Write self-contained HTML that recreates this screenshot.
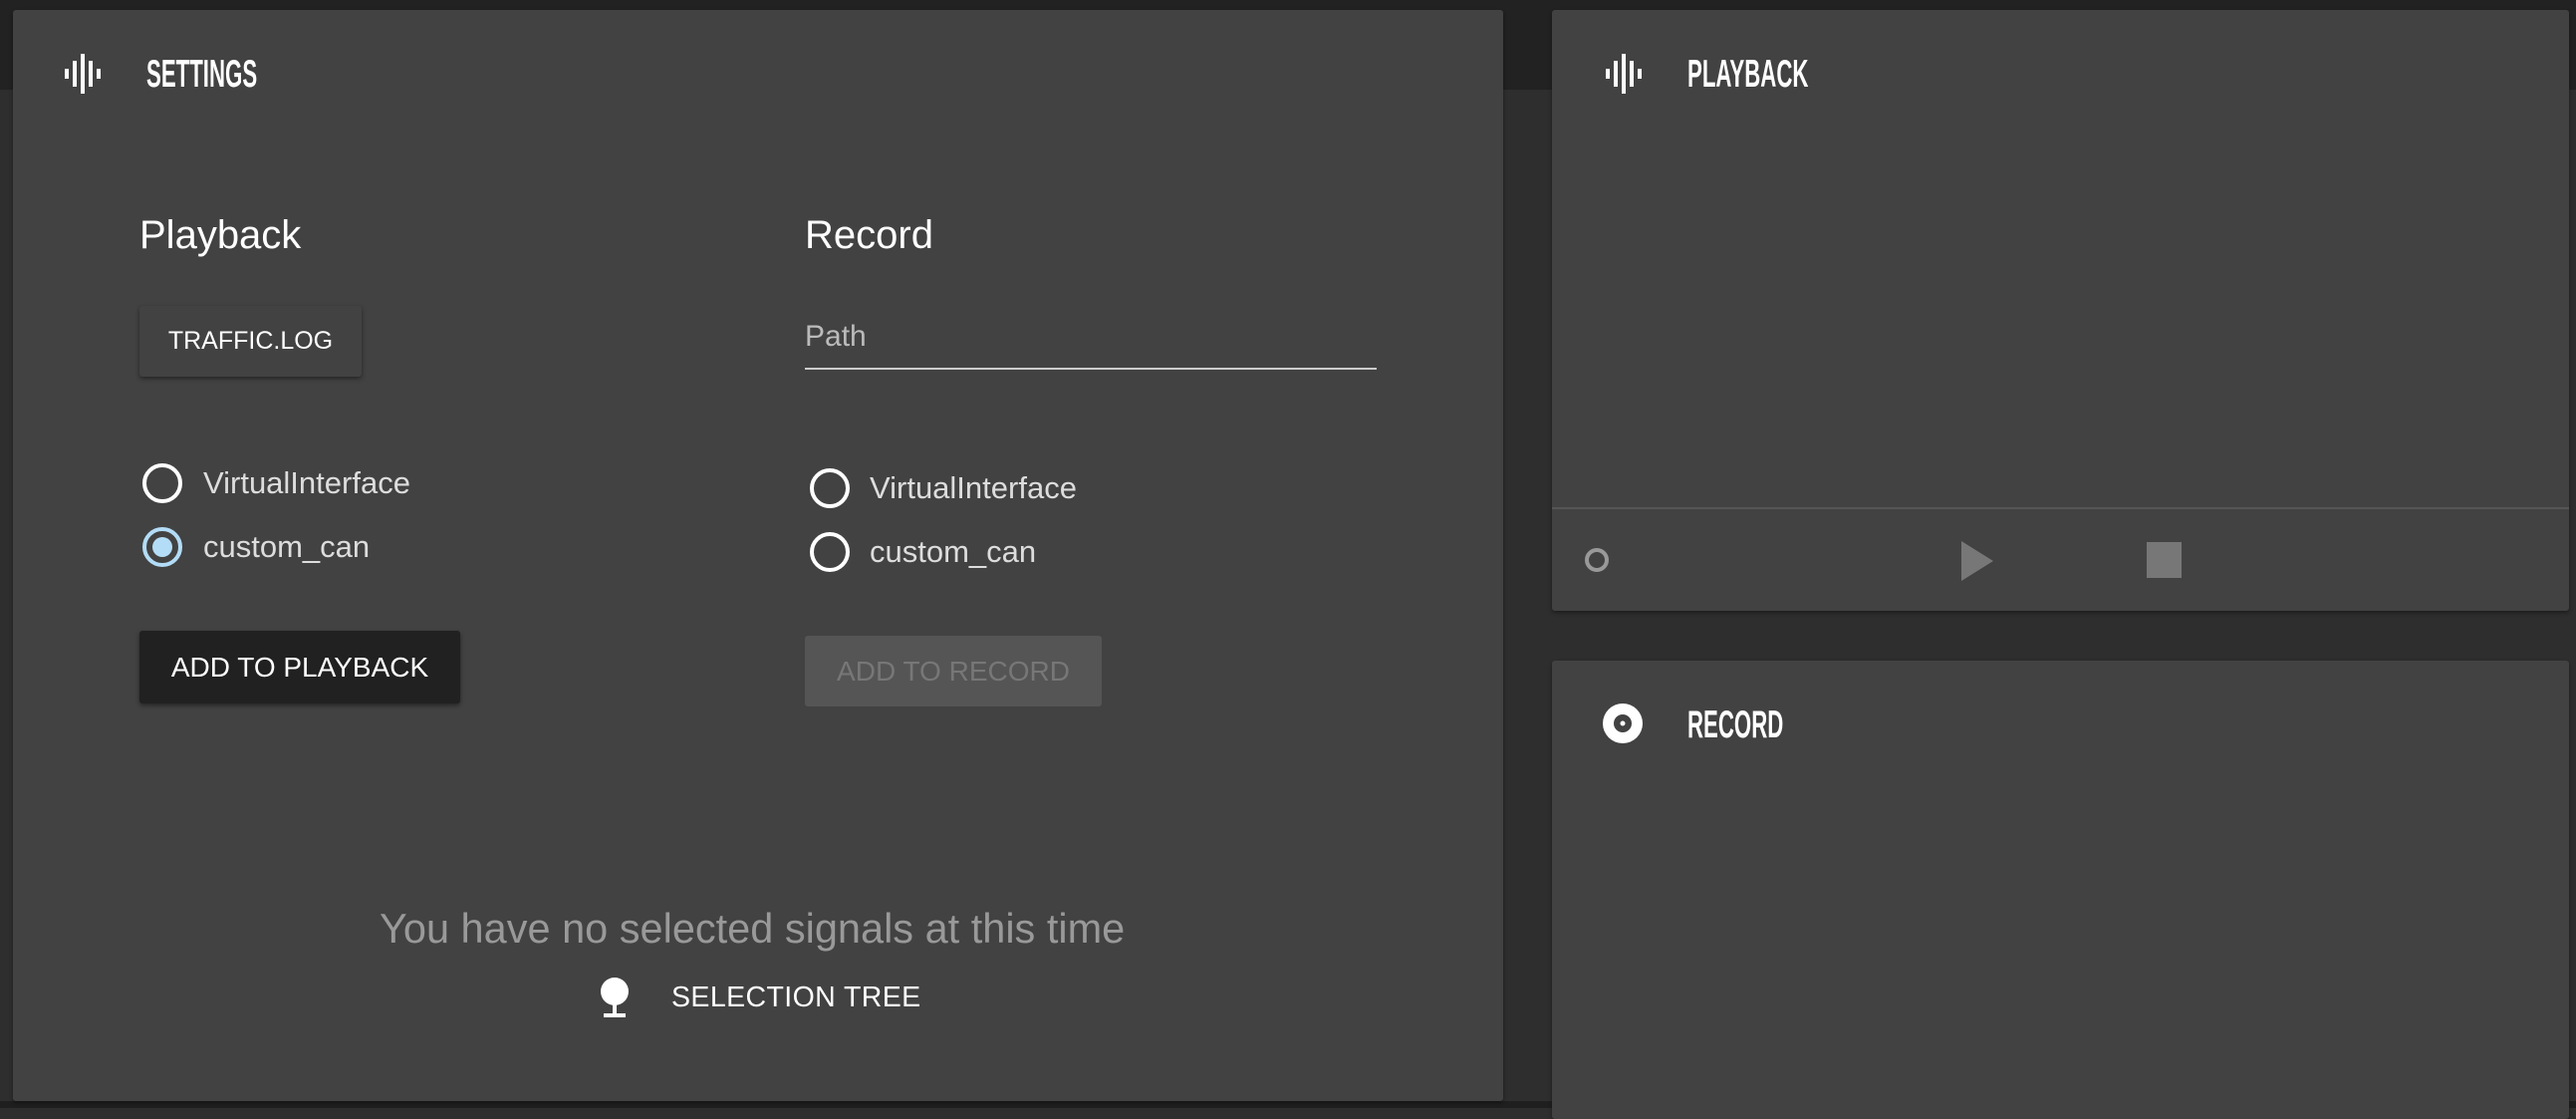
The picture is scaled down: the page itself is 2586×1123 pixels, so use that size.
<!DOCTYPE html>
<html><head><meta charset="utf-8">
<style>
*{margin:0;padding:0;box-sizing:border-box}
body{width:2586px;height:1112px;background:#2e2e2e;position:relative;overflow:hidden;font-family:"Liberation Sans",sans-serif;}
.hdr{position:absolute;left:0;top:0;width:2586px;height:90px;background:#222}
.bot{position:absolute;left:0;top:1105px;width:2586px;height:7px;background:#1f1f1f}
.card{position:absolute;background:#424242;border-radius:3px;box-shadow:0 2px 4px rgba(0,0,0,.4)}
.abs{position:absolute;white-space:nowrap}
.title{font-family:"Liberation Sans Narrow","Liberation Sans",sans-serif;font-weight:bold;color:#fff;font-size:39px;line-height:39px;transform:scaleX(.57);transform-origin:left center}
.h{font-size:40px;color:#fff;font-weight:300;line-height:40px}
.lbl{font-size:31px;color:#ddd;line-height:31px}
.radio{position:absolute;width:40px;height:40px;border:4px solid #fff;border-radius:50%}
.btn{position:absolute;border-radius:3px;display:flex;align-items:center;justify-content:center;font-size:28px}
</style></head><body>
<div class="hdr"></div>
<div class="bot"></div>

<div class="card" style="left:13px;top:10px;width:1496px;height:1095px"></div>
<svg class="abs" style="left:60px;top:54px" width="44" height="42"><g fill="#fff"><rect x="5" y="15" width="4" height="10"/><rect x="13" y="7" width="4" height="26"/><rect x="21" y="0" width="4" height="40"/><rect x="29" y="7" width="4" height="26"/><rect x="37" y="15" width="4" height="10"/></g></svg>
<div class="abs title" style="left:147px;top:55px">SETTINGS</div>

<div class="abs h" style="left:140px;top:216px">Playback</div>
<div class="btn" style="left:140px;top:307px;width:223px;height:71px;background:#424242;box-shadow:0 2px 5px rgba(0,0,0,.45);color:#fff;font-size:25px">TRAFFIC.LOG</div>
<div class="radio" style="left:143px;top:465px"></div>
<div class="abs lbl" style="left:204px;top:469px">VirtualInterface</div>
<div class="radio" style="left:143px;top:529px;border-color:#b3dcf7"><div style="position:absolute;left:6px;top:6px;width:20px;height:20px;border-radius:50%;background:#b3dcf7"></div></div>
<div class="abs lbl" style="left:204px;top:533px">custom_can</div>
<div class="btn" style="left:140px;top:633px;width:322px;height:73px;background:#212121;color:#fff;box-shadow:0 2px 5px rgba(0,0,0,.45)">ADD TO PLAYBACK</div>

<div class="abs h" style="left:808px;top:216px">Record</div>
<div class="abs" style="left:808px;top:321px;font-size:30px;color:#bbb">Path</div>
<div class="abs" style="left:808px;top:369px;width:574px;height:2px;background:#ccc"></div>
<div class="radio" style="left:813px;top:470px"></div>
<div class="abs lbl" style="left:873px;top:474px">VirtualInterface</div>
<div class="radio" style="left:813px;top:534px"></div>
<div class="abs lbl" style="left:873px;top:538px">custom_can</div>
<div class="btn" style="left:808px;top:638px;width:298px;height:71px;background:#555;color:#777">ADD TO RECORD</div>

<div class="abs" style="left:381px;top:908px;font-size:41.5px;color:#999;font-weight:300">You have no selected signals at this time</div>
<svg class="abs" style="left:600px;top:981px" width="36" height="44"><ellipse cx="17" cy="14" rx="14" ry="14" fill="#fff"/><rect x="15" y="24" width="4" height="14" fill="#fff"/><rect x="6" y="36" width="22" height="4" fill="#fff"/></svg>
<div class="abs" style="left:674px;top:985px;font-size:28.5px;color:#fff;letter-spacing:0.4px">SELECTION TREE</div>

<div class="card" style="left:1558px;top:10px;width:1021px;height:603px"></div>
<svg class="abs" style="left:1607px;top:54px" width="44" height="42"><g fill="#fff"><rect x="5" y="15" width="4" height="10"/><rect x="13" y="7" width="4" height="26"/><rect x="21" y="0" width="4" height="40"/><rect x="29" y="7" width="4" height="26"/><rect x="37" y="15" width="4" height="10"/></g></svg>
<div class="abs title" style="left:1694px;top:55px">PLAYBACK</div>
<div class="abs" style="left:1558px;top:509px;width:1021px;height:2px;background:#555"></div>
<div class="abs" style="left:1591px;top:550px;width:24px;height:24px;border:4px solid #999;border-radius:50%"></div>
<svg class="abs" style="left:1969px;top:543px" width="32" height="40"><polygon points="0,0 32,20 0,40" fill="#777"/></svg>
<div class="abs" style="left:2155px;top:544px;width:35px;height:36px;background:#777"></div>

<div class="card" style="left:1558px;top:663px;width:1021px;height:460px"></div>
<svg class="abs" style="left:1608px;top:705px" width="42" height="42"><circle cx="21" cy="21" r="20" fill="#fff"/><circle cx="21" cy="21" r="9" fill="#424242"/><circle cx="21" cy="21" r="2.5" fill="#fff"/></svg>
<div class="abs title" style="left:1694px;top:708px">RECORD</div>
</body></html>
